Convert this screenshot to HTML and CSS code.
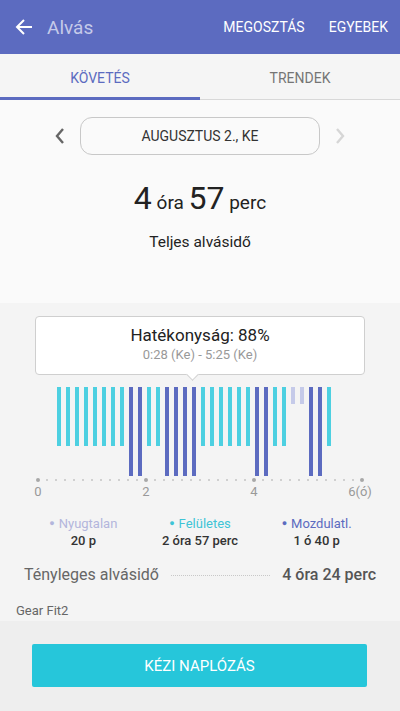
FILE: index.html
```html
<!DOCTYPE html>
<html lang="hu">
<head>
  <meta charset="UTF-8">
  <meta name="viewport" content="width=device-width, initial-scale=1.0">
  <title>Alvás</title>
  <link rel="stylesheet" href="styles.css">
</head>
<body>
  <!-- felső sáv -->
  <header class="appbar">
    <svg class="back" width="18" height="18" viewBox="0 0 18 18">
      <path d="M17 9H2M9 2L2 9l7 7" fill="none" stroke="#fff" stroke-width="2"/>
    </svg>
    <span class="title">Alvás</span>
    <span class="action">MEGOSZTÁS</span>
    <span class="action">EGYEBEK</span>
  </header>

  <nav class="tabs">
    <div class="tab active">KÖVETÉS</div>
    <div class="tab">TRENDEK</div>
  </nav>

  <section class="summary">
    <div class="date-row">
      <svg class="chev" width="12" height="18" viewBox="0 0 12 18">
        <path d="M9 2L3 9l6 7" fill="none" stroke="#666" stroke-width="2.4"/>
      </svg>
      <div class="date-pill">AUGUSZTUS 2., KE</div>
      <svg class="chev" width="12" height="18" viewBox="0 0 12 18">
        <path d="M3 2l6 7-6 7" fill="none" stroke="#d6d6d6" stroke-width="2.4"/>
      </svg>
    </div>
    <div class="total"><b>4</b> óra <b>57</b> perc</div>
    <div class="total-label">Teljes alvásidő</div>
  </section>

  <section class="chart">
    <div class="tooltip">
      <div class="tip-title">Hatékonyság: 88%</div>
      <div class="tip-sub">0:28 (Ke) - 5:25 (Ke)</div>
    </div>

    <div class="bars">
      <i class="c"></i><i class="c"></i><i class="c"></i><i class="c"></i>
      <i class="c"></i><i class="c"></i><i class="c"></i><i class="c"></i>
      <i class="d"></i><i class="d"></i>
      <i class="c"></i><i class="c"></i>
      <i class="d"></i><i class="d"></i><i class="d"></i><i class="d"></i>
      <i class="c"></i><i class="c"></i><i class="c"></i><i class="c"></i><i class="c"></i><i class="c"></i>
      <i class="d"></i><i class="d"></i>
      <i class="c"></i><i class="c"></i>
      <i class="l"></i><i class="l"></i>
      <i class="d"></i><i class="d"></i>
      <i class="c"></i>
    </div>

    <svg class="axis" width="400" height="26" viewBox="0 0 400 26">
      <g fill="#c4c4c4">
        <circle cx="47" cy="4" r="1"/><circle cx="56" cy="4" r="1"/><circle cx="65" cy="4" r="1"/>
        <circle cx="74" cy="4" r="1"/><circle cx="83" cy="4" r="1"/><circle cx="92" cy="4" r="1"/>
        <circle cx="101" cy="4" r="1"/><circle cx="110" cy="4" r="1"/><circle cx="119" cy="4" r="1"/>
        <circle cx="128" cy="4" r="1"/><circle cx="137" cy="4" r="1"/>
        <circle cx="155" cy="4" r="1"/><circle cx="164" cy="4" r="1"/><circle cx="173" cy="4" r="1"/>
        <circle cx="182" cy="4" r="1"/><circle cx="191" cy="4" r="1"/><circle cx="200" cy="4" r="1"/>
        <circle cx="209" cy="4" r="1"/><circle cx="218" cy="4" r="1"/><circle cx="227" cy="4" r="1"/>
        <circle cx="236" cy="4" r="1"/><circle cx="245" cy="4" r="1"/>
        <circle cx="263" cy="4" r="1"/><circle cx="272" cy="4" r="1"/><circle cx="281" cy="4" r="1"/>
        <circle cx="290" cy="4" r="1"/><circle cx="299" cy="4" r="1"/><circle cx="308" cy="4" r="1"/>
        <circle cx="317" cy="4" r="1"/><circle cx="326" cy="4" r="1"/><circle cx="335" cy="4" r="1"/>
        <circle cx="344" cy="4" r="1"/><circle cx="353" cy="4" r="1"/>
      </g>
      <g fill="#a8a8a8">
        <circle cx="38" cy="4" r="2"/><circle cx="146" cy="4" r="2"/>
        <circle cx="254" cy="4" r="2"/><circle cx="362" cy="4" r="2"/>
      </g>
      <g fill="#999" font-family="Roboto, sans-serif" font-size="13" text-anchor="middle">
        <text x="38" y="20">0</text>
        <text x="146" y="20">2</text>
        <text x="254" y="20">4</text>
        <text x="360" y="20">6(ó)</text>
      </g>
    </svg>

    <div class="legend">
      <div class="leg">
        <span class="leg-name restless">Nyugtalan</span>
        <span class="leg-val">20 p</span>
      </div>
      <div class="leg">
        <span class="leg-name light">Felületes</span>
        <span class="leg-val">2 óra 57 perc</span>
      </div>
      <div class="leg">
        <span class="leg-name deep">Mozdulatl.</span>
        <span class="leg-val">1 ó 40 p</span>
      </div>
    </div>

    <div class="actual">
      <span class="actual-label">Tényleges alvásidő</span>
      <span class="dots"></span>
      <span class="actual-val">4 óra 24 perc</span>
    </div>

    <div class="device">Gear Fit2</div>
  </section>

  <footer class="bottom">
    <button class="log-btn">KÉZI NAPLÓZÁS</button>
  </footer>
</body>
</html>
```

FILE: styles.css
```css
* {
  box-sizing: border-box;
}
body {
  margin: 0;
  font-family: Roboto, "Noto Sans", sans-serif;
  background: #eeeeee;
  width: 400px;
  height: 711px;
  overflow: hidden;
}
.appbar {
  height: 54px;
  background-color: #5c6bc0;
  display: flex;
  align-items: center;
  padding: 0 12px 0 15px;
}
.back {
  margin-right: 14px;
}
.title {
  flex: 1;
  font-size: 19px;
  color: #c5cae9;
}
.action {
  color: #fff;
  font-size: 14px;
  margin-left: 24px;
}
.tabs {
  display: flex;
  height: 46px;
  background-color: #f5f5f5;
  border-bottom: 1px solid #d8d8d8;
}
.tab {
  flex: 1;
  display: flex;
  align-items: center;
  justify-content: center;
  font-size: 14px;
  color: #757575;
  padding-top: 4px;
  border-bottom: 3px solid transparent;
  margin-bottom: -1px;
}
.tab.active {
  color: #5c6bc0;
  border-bottom-color: #5c6bc0;
}
.summary {
  background-color: #fafafa;
  height: 203px;
  padding-top: 17px;
  text-align: center;
}
.date-row {
  display: flex;
  align-items: center;
  justify-content: center;
  gap: 14px;
}
.date-pill {
  width: 240px;
  height: 38px;
  border: 1px solid #c8c8c8;
  border-radius: 12px;
  display: flex;
  align-items: center;
  justify-content: center;
  font-size: 14px;
  color: #333;
}
.total {
  margin-top: 23px;
  font-size: 19px;
  color: #222;
  line-height: 40px;
}
.total b {
  font-weight: 400;
  font-size: 32px;
}
.total-label {
  margin-top: 10px;
  font-size: 15.5px;
  color: #222;
}
.chart {
  background-color: #f4f4f4;
  height: 318px;
  padding-top: 13px;
  position: relative;
}
.tooltip {
  position: relative;
  margin-left: 35px;
  width: 330px;
  height: 59px;
  background: #fff;
  border: 1px solid #cfcfcf;
  border-radius: 4px;
  text-align: center;
  padding-top: 8px;
}
.tooltip::after {
  content: "";
  position: absolute;
  left: 152px;
  bottom: -5px;
  width: 8px;
  height: 8px;
  background: #fff;
  border-right: 1px solid #cfcfcf;
  border-bottom: 1px solid #cfcfcf;
  transform: rotate(45deg);
}
.tip-title {
  font-size: 17px;
  color: #222;
}
.tip-sub {
  font-size: 13px;
  color: #999;
  margin-top: 2px;
}
.bars {
  display: flex;
  align-items: flex-start;
  gap: 5px;
  margin: 12px 0 0 57px;
  height: 89px;
}
.bars i {
  width: 4px;
}
.bars .c {
  height: 59px;
  background: #4dd0e1;
}
.bars .d {
  height: 89px;
  background: #5c6bc0;
}
.bars .l {
  height: 17px;
  background: #c5cae9;
}
.axis {
  display: block;
}
.legend {
  display: grid;
  grid-template-columns: 1fr 1fr 1fr;
  padding: 0 25px;
  margin-top: 14px;
  text-align: center;
  font-size: 13px;
}
.leg {
  display: flex;
  flex-direction: column;
  gap: 2px;
}
.leg-name::before {
  content: "\25CF";
  font-size: 9px;
  margin-right: 4px;
  vertical-align: 2px;
}
.restless {
  color: #b3b6dc;
}
.light {
  color: #3fc4d6;
}
.deep {
  color: #5c6bc0;
}
.leg-val {
  color: #333;
  font-weight: 500;
}
.actual {
  display: flex;
  align-items: center;
  padding: 0 24px;
  margin-top: 17px;
  font-size: 16px;
}
.actual-label {
  color: #666;
}
.dots {
  flex: 1;
  margin: 2px 12px 0;
  border-top: 1px dotted #c8c8c8;
}
.actual-val {
  color: #555;
  font-weight: 500;
}
.device {
  margin: 19px 0 0 16px;
  font-size: 13px;
  color: #666;
}
.bottom {
  height: 90px;
  padding: 23px 33px 0 32px;
}
.log-btn {
  width: 100%;
  height: 43px;
  border: none;
  border-radius: 2px;
  background-color: #26c6da;
  color: #fff;
  font-family: Roboto, sans-serif;
  font-size: 15px;
}
```
